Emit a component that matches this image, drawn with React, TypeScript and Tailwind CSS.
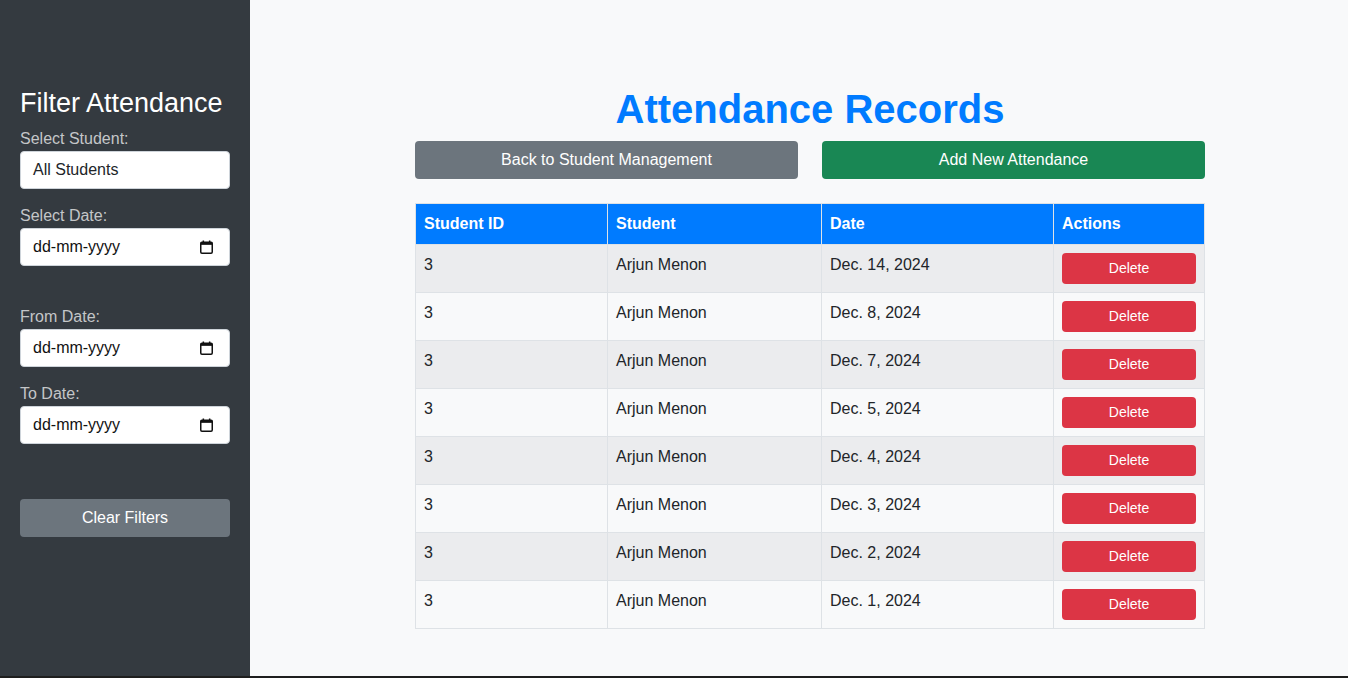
import React from "react";

const rows = [
  "Dec. 14, 2024",
  "Dec. 8, 2024",
  "Dec. 7, 2024",
  "Dec. 5, 2024",
  "Dec. 4, 2024",
  "Dec. 3, 2024",
  "Dec. 2, 2024",
  "Dec. 1, 2024",
];

function CalendarIcon() {
  return (
    <svg width="13" height="14" viewBox="0 0 13 14" fill="none">
      <rect x="0.75" y="2.25" width="11.5" height="11" rx="1.2" stroke="#111" strokeWidth="1.5" />
      <rect x="0.75" y="2.25" width="11.5" height="2.6" fill="#111" />
      <rect x="2.6" y="0.5" width="1.5" height="2.5" fill="#111" />
      <rect x="8.9" y="0.5" width="1.5" height="2.5" fill="#111" />
    </svg>
  );
}

function DateField() {
  return (
    <div className="flex h-[38px] w-[210px] items-center justify-between rounded-[4px] border border-[#ced4da] bg-white pl-[12px] pr-[16px] text-[16px] text-[#111]">
      <span>dd-mm-yyyy</span>
      <CalendarIcon />
    </div>
  );
}

function Label({ children, className = "" }: { children: React.ReactNode; className?: string }) {
  return (
    <div className={`h-[18px] text-[16px] leading-[18px] text-[#c4c6c8] ${className}`}>{children}</div>
  );
}

export default function App() {
  return (
    <div
      className="flex h-[678px] w-[1348px] flex-col overflow-hidden"
      style={{ fontFamily: '"Liberation Sans", Arial, sans-serif' }}
    >
      <div className="flex h-[676px]">
        <aside className="w-[250px] shrink-0 bg-[#343a40] px-[20px] pt-[87px]">
          <h2 className="h-[32px] text-[27px] leading-[32px] text-white">Filter Attendance</h2>
          <Label className="mt-[11px] mb-[3px]">Select Student:</Label>
          <div className="flex h-[38px] w-[210px] items-center rounded-[4px] border border-[#ced4da] bg-white pl-[12px] text-[16px] text-[#212529]">
            All Students
          </div>
          <Label className="mt-[18px] mb-[3px]">Select Date:</Label>
          <DateField />
          <Label className="mt-[42px] mb-[3px]">From Date:</Label>
          <DateField />
          <Label className="mt-[18px] mb-[3px]">To Date:</Label>
          <DateField />
          <button className="mt-[55px] flex h-[38px] w-[210px] items-center justify-center rounded-[4px] bg-[#6c757d] text-[16px] text-white">
            Clear Filters
          </button>
        </aside>
        <main className="flex-1 bg-[#f8f9fa] pl-[22px] pt-[85px]">
          <div className="mx-auto w-[790px]">
            <h1 className="h-[48px] text-center text-[40px] font-bold leading-[48px] text-[#007bff]">
              Attendance Records
            </h1>
            <div className="mt-[8px] flex gap-[24px]">
              <button className="flex h-[38px] flex-1 items-center justify-center rounded-[4px] bg-[#6c757d] text-[16px] text-white">
                Back to Student Management
              </button>
              <button className="flex h-[38px] flex-1 items-center justify-center rounded-[4px] bg-[#198754] text-[16px] text-white">
                Add New Attendance
              </button>
            </div>
            <table className="mt-[24px] w-[789px] table-fixed border-collapse text-[16px] text-[#212529]">
              <colgroup>
                <col className="w-[192px]" />
                <col className="w-[214px]" />
                <col className="w-[232px]" />
                <col className="w-[151px]" />
              </colgroup>
              <thead>
                <tr className="bg-[#007bff] text-white">
                  {["Student ID", "Student", "Date", "Actions"].map((h) => (
                    <th
                      key={h}
                      className="border border-[#dee2e6] px-[8px] py-[8px] text-left align-top font-bold leading-[24px]"
                    >
                      {h}
                    </th>
                  ))}
                </tr>
              </thead>
              <tbody>
                {rows.map((d, i) => (
                  <tr key={d} className={i % 2 === 0 ? "bg-[#ebecee]" : "bg-[#f8f9fa]"}>
                    <td className="border border-[#dee2e6] p-[8px] align-top leading-[24px]">3</td>
                    <td className="border border-[#dee2e6] p-[8px] align-top leading-[24px]">Arjun Menon</td>
                    <td className="border border-[#dee2e6] p-[8px] align-top leading-[24px]">{d}</td>
                    <td className="border border-[#dee2e6] p-[8px] align-top">
                      <button className="flex h-[31px] w-full items-center justify-center rounded-[4px] bg-[#dc3545] text-[14px] text-white">
                        Delete
                      </button>
                    </td>
                  </tr>
                ))}
              </tbody>
            </table>
          </div>
        </main>
      </div>
      <div className="h-[2px] bg-[#1e1e1e]" />
    </div>
  );
}
